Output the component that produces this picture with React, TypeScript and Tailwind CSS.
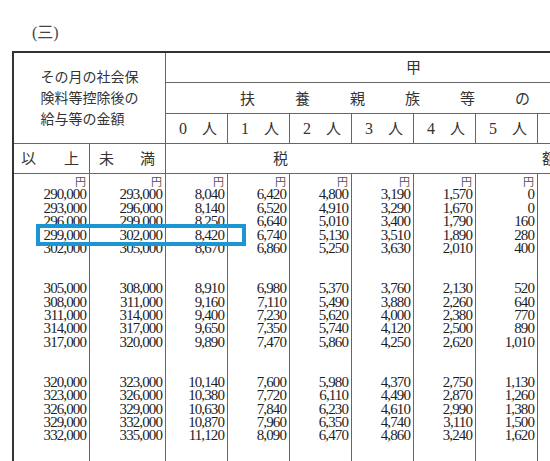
const serif = "font-['Liberation_Serif',serif]";
const jp = "font-['Noto_Sans_CJK_JP',sans-serif]";

// each group: 5 rows, followed by 2 blank lines
const lower = [290000, 293000, 296000, 299000, 302000, 305000, 308000, 311000, 314000, 317000, 320000, 323000, 326000, 329000, 332000];
const taxCols: number[][] = [
  [8040, 8140, 8250, 8420, 8670, 8910, 9160, 9400, 9650, 9890, 10140, 10380, 10630, 10870, 11120],
  [6420, 6520, 6640, 6740, 6860, 6980, 7110, 7230, 7350, 7470, 7600, 7720, 7840, 7960, 8090],
  [4800, 4910, 5010, 5130, 5250, 5370, 5490, 5620, 5740, 5860, 5980, 6110, 6230, 6350, 6470],
  [3190, 3290, 3400, 3510, 3630, 3760, 3880, 4000, 4120, 4250, 4370, 4490, 4610, 4740, 4860],
  [1570, 1670, 1790, 1890, 2010, 2130, 2260, 2380, 2500, 2620, 2750, 2870, 2990, 3110, 3240],
  [0, 0, 160, 280, 400, 520, 640, 770, 890, 1010, 1130, 1260, 1380, 1500, 1620],
];

const fmt = (n: number) => n.toLocaleString('en-US');

function withGaps(values: number[]) {
  const lines: string[] = [];
  values.forEach((v, i) => {
    if (i > 0 && i % 5 === 0) lines.push('', '');
    lines.push(fmt(v));
  });
  return lines;
}

function NumberColumn({ values, width }: { values: number[] | null; width: string }) {
  return (
    <div className={`${width} shrink-0 h-[300px] border-r border-[#666] pr-[3px] pt-[1px] text-right text-[#1e1e1e]`}>
      {values && (
        <>
          <div className={`${jp} text-[11px] leading-[13.4px] h-[13.4px] text-[#555]`}>円</div>
          {withGaps(values).map((line, i) => (
            <div key={i} className={`${serif} text-[15px] leading-[13.4px] tracking-[-0.9px] h-[13.4px]`}>
              {line || '\u00a0'}
            </div>
          ))}
        </>
      )}
    </div>
  );
}

function PeopleCell({ n }: { n: number }) {
  return (
    <div className="w-[62px] shrink-0 h-full border-r border-[#666] flex items-center justify-between pl-[13px] pr-[10px] text-[#333]">
      <span className={`${serif} text-[16px]`}>{n}</span>
      <span className={`${jp} text-[15px]`}>人</span>
    </div>
  );
}

export default function App() {
  return (
    <div className="relative w-[550px] h-[461px] overflow-hidden bg-white text-[#2a2a2a]">
      <div className="h-[51px] pl-[32px] pt-[21px] text-[16px] leading-[20px] text-[#444]">
        <span className={serif}>(</span>
        <span className={jp}>三</span>
        <span className={serif}>)</span>
      </div>

      <div className="ml-[12px] w-[650px] border-l-2 border-t-2 border-[#333]">
        {/* header block */}
        <div className="flex">
          <div className="w-[152px] shrink-0 h-[90px] border-r border-[#666] flex items-center justify-center">
            <div className={`${jp} text-[14px] leading-[21px] text-[#333] text-left w-[98px] pb-[1px]`}>
              その月の社会保
              <br />
              険料等控除後の
              <br />
              給与等の金額
            </div>
          </div>
          <div className="flex-1 flex flex-col">
            <div className={`${jp} h-[30px] border-b border-[#666] flex items-center pl-[240px] text-[15px] text-[#333]`}>甲</div>
            <div className={`${jp} h-[31px] border-b border-[#666] flex items-center gap-[40px] pl-[74px] text-[15px] text-[#333]`}>
              <span>扶</span>
              <span>養</span>
              <span>親</span>
              <span>族</span>
              <span>等</span>
              <span>の</span>
            </div>
            <div className="h-[29px] flex">
              {[0, 1, 2, 3, 4, 5, 6].map(n => (
                <PeopleCell key={n} n={n} />
              ))}
            </div>
          </div>
        </div>

        {/* 以上 / 未満 / 税額 row */}
        <div className={`${jp} flex h-[31px] border-t border-b border-[#666] text-[15px] text-[#333]`}>
          <div className="w-[76px] shrink-0 border-r border-[#666] flex items-center justify-between pl-[7px] pr-[10px]">
            <span>以</span>
            <span>上</span>
          </div>
          <div className="w-[76px] shrink-0 border-r border-[#666] flex items-center justify-between pl-[9px] pr-[10px]">
            <span>未</span>
            <span>満</span>
          </div>
          <div className="flex-1 flex items-center gap-[254px] pl-[107px]">
            <span>税</span>
            <span>額</span>
          </div>
        </div>

        {/* data */}
        <div className="flex">
          <NumberColumn width="w-[76px]" values={lower} />
          <NumberColumn width="w-[76px]" values={lower.map(v => v + 3000)} />
          {taxCols.map((col, i) => (
            <NumberColumn key={i} width="w-[62px]" values={col} />
          ))}
          <NumberColumn width="w-[62px]" values={null} />
        </div>
      </div>

      {/* highlighted row */}
      <div className="absolute left-[36px] top-[224px] w-[210px] h-[22px] border-4 border-[#1c95d3]" />
    </div>
  );
}
